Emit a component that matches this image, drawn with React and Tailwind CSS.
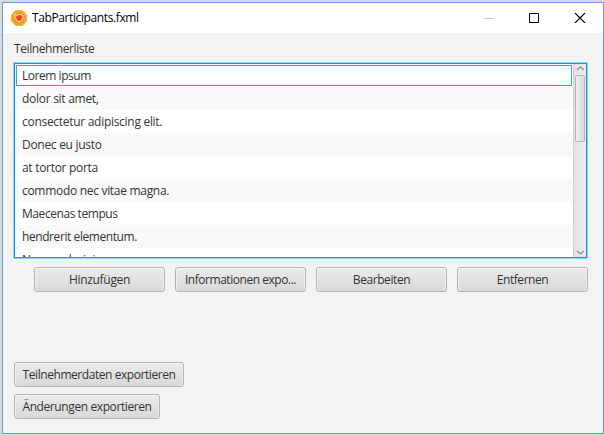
const rows = [
  ['Lorem ipsum', 'tracking-[-0.46px]'],
  ['dolor sit amet,', 'tracking-[-0.28px]'],
  ['consectetur adipiscing elit.', 'tracking-[-0.29px]'],
  ['Donec eu justo', 'tracking-[-0.29px]'],
  ['at tortor porta', 'tracking-[-0.3px]'],
  ['commodo nec vitae magna.', 'tracking-[-0.3px]'],
  ['Maecenas tempus', 'tracking-[-0.44px]'],
  ['hendrerit elementum.', 'tracking-[-0.42px]'],
  ['Nunc eu lacinia', 'tracking-[-0.4px]'],
];

function Button({ children, className }) {
  return (
    <button
      className={`flex h-[25px] shrink-0 items-center justify-center rounded-[3px] border border-[#b2b2b2] bg-linear-to-b from-[#ebebeb] to-[#d9d9d9] pt-px whitespace-nowrap shadow-[inset_0_1px_0_#f8f8f8,inset_1px_0_0_#efefef,inset_-1px_0_0_#efefef] ${className}`}
    >
      {children}
    </button>
  );
}

function Logo() {
  return (
    <svg className="size-4" viewBox="0 0 16 16">
      <path d="M4.500.7h7L15.300 5v6l-3.800 4.300h-7L.7 11V5z" fill="#f9a51b" stroke="#f9a51b" strokeLinejoin="round" />
      <circle cx="8" cy="8" r="5.200" fill="#f58a22" />
      <path d="M3.500 4.500 6 5.200l3-.9 3.200 1.500-.7 3.500L9.500 12l-3.300-.8L4.500 8.500z" fill="#f0602a" stroke="#ffe1bd" strokeWidth="1" />
      <circle cx="8.200" cy="8" r="1.700" fill="#e8401c" />
    </svg>
  );
}

export default function App() {
  return (
    <div className="h-[435px] w-[604px] bg-[#d9d9d9] pt-0.5 pl-0.5 font-['Open_Sans','Noto_Sans',sans-serif] text-[12px] leading-4 text-[#333]">
      <div className="flex h-[432px] w-[602px] flex-col border border-[#57a0ea] bg-[#f3f3f3]">
        <header className="flex h-[30px] shrink-0 items-center bg-white pl-2 text-black">
          <Logo />
          <span className="ml-[5px] tracking-[-0.39px] whitespace-nowrap">TabParticipants.fxml</span>
          <div className="ml-auto flex items-center pr-[17px]">
            <svg className="h-[10px] w-[102px]" viewBox="0 0 102 10" fill="none">
              <path d="M0 5.500h10" stroke="#c8c8c8" />
              <path d="M45.500.5h9v9h-9z" stroke="#000" />
              <path d="M91 0l10 10M101 0L91 10" stroke="#000" strokeWidth="1.100" />
            </svg>
          </div>
        </header>

        <main className="flex flex-col pt-2 pl-[10px]">
          <label className="ml-px h-[21px] leading-4 tracking-[-0.4px]">Teilnehmerliste</label>
          <div className="h-[197px] w-[575px] rounded-[1px] border border-[#93d4ea]">
            <div className="flex h-[195px] overflow-hidden border border-[#039ed3] bg-white">
              <ul className="w-[558px] shrink-0">
                {rows.map(([text, tracking], i) => (
                  <li
                    key={i}
                    className={`h-[23px] p-px ${i % 2 ? 'bg-[#f9f9f9]' : 'bg-white'}`}
                  >
                    <div
                      className={`h-[21px] w-[556px] border pl-[5px] leading-[20px] whitespace-nowrap ${tracking} ${i === 0 ? 'border-[#36abc9]' : 'border-transparent'}`}
                    >
                      {text}
                    </div>
                  </li>
                ))}
              </ul>
              <div className="flex h-[193px] w-[13px] flex-col items-center border-l border-[#d2d2d2] bg-linear-to-r from-[#e2e2e2] to-[#ededed]">
                <svg className="h-[11px] w-[9px] shrink-0" viewBox="0 0 9 11" fill="none">
                  <path d="M1 5.800 4.500 3 8 5.800" stroke="#999" strokeWidth="1.500" />
                </svg>
                <div className="h-[67px] w-[10px] rounded-[2px] border border-[#b4b4b4] bg-linear-to-r from-[#f0f0f0] to-[#d9d9d9]" />
                <svg className="mt-auto h-[9px] w-[9px] shrink-0" viewBox="0 0 9 9" fill="none">
                  <path d="M1 3 4.500 5.800 8 3" stroke="#999" strokeWidth="1.500" />
                </svg>
              </div>
            </div>
          </div>

          <div className="mt-2 ml-[21px] flex gap-[10px]">
            <Button className="w-[131px] tracking-[-0.3px]">Hinzufügen</Button>
            <Button className="w-[131px] tracking-[-0.46px]">Informationen expo...</Button>
            <Button className="w-[131px] tracking-[-0.42px]">Bearbeiten</Button>
            <Button className="w-[131px] tracking-[-0.45px]">Entfernen</Button>
          </div>

          <div className="mt-[70px] ml-px flex flex-col gap-[7px]">
            <Button className="w-[170px] tracking-[-0.44px]">Teilnehmerdaten exportieren</Button>
            <Button className="w-[146px] tracking-[-0.4px]">Änderungen exportieren</Button>
          </div>
        </main>
      </div>
    </div>
  );
}
